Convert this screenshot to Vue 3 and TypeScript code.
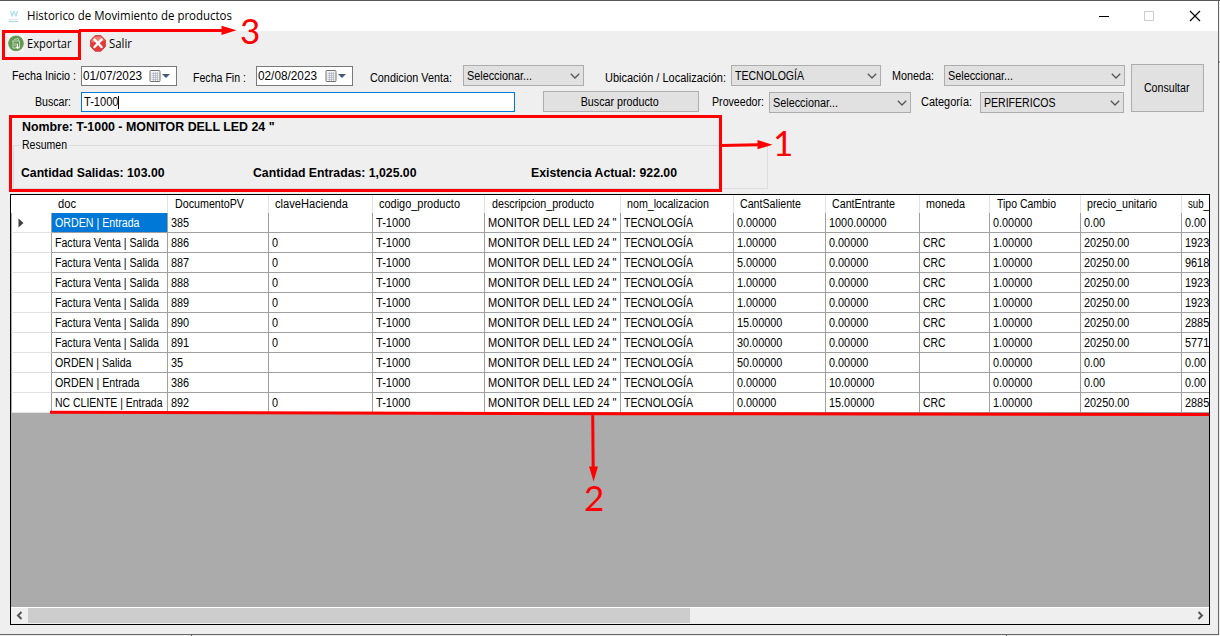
<script setup lang="ts">
import type { Directive } from 'vue'

// Condenses or widens a label horizontally so it occupies the given width in pixels.
const vFit: Directive<HTMLElement, number> = {
  mounted(el, { value }) {
    const natural = el.getBoundingClientRect().width
    if (natural > 0 && value > 0) el.style.transform = `scaleX(${value / natural})`
  },
}

interface Column {
  name: string
  width: number
  text: number
  pad: number
}

const columns: Column[] = [
  { name: 'doc', width: 116, text: 18, pad: 6 },
  { name: 'DocumentoPV', width: 101, text: 69, pad: 7 },
  { name: 'claveHacienda', width: 104, text: 73, pad: 6 },
  { name: 'codigo_producto', width: 112, text: 81, pad: 6 },
  { name: 'descripcion_producto', width: 136, text: 102, pad: 7 },
  { name: 'nom_localizacion', width: 113, text: 82, pad: 6 },
  { name: 'CantSaliente', width: 92, text: 61, pad: 6 },
  { name: 'CantEntrante', width: 94, text: 63, pad: 6 },
  { name: 'moneda', width: 70, text: 39, pad: 6 },
  { name: 'Tipo Cambio', width: 91, text: 59, pad: 7 },
  { name: 'precio_unitario', width: 101, text: 70, pad: 6 },
  { name: 'sub_', width: 28, text: 21, pad: 6 },
]

const item = ['T-1000', 'MONITOR DELL LED 24 "', 'TECNOLOGÍA']
const sale = (doc: string, qty: string, sub: string) =>
  ['Factura Venta | Salida', doc, '0', ...item, qty, '0.00000', 'CRC', '1.00000', '20250.00', sub]
const order = (kind: string, doc: string, out: string, into: string) =>
  [`ORDEN | ${kind}`, doc, '', ...item, out, into, '', '0.00000', '0.00', '0.00']

const rows: string[][] = [
  order('Entrada', '385', '0.00000', '1000.00000'),
  sale('886', '1.00000', '1923'),
  sale('887', '5.00000', '9618'),
  sale('888', '1.00000', '1923'),
  sale('889', '1.00000', '1923'),
  sale('890', '15.00000', '2885'),
  sale('891', '30.00000', '5771'),
  order('Salida', '35', '50.00000', '0.00000'),
  order('Entrada', '386', '0.00000', '10.00000'),
  ['NC CLIENTE | Entrada', '892', '0', ...item, '0.00000', '15.00000', 'CRC', '1.00000', '20250.00', '2885'],
]

const wordWidths: Record<string, number> = {
  'T-1000': 34.5,
  'MONITOR DELL LED 24 "': 128.5,
  'TECNOLOGÍA': 69,
  'Factura Venta | Salida': 104,
  'ORDEN | Entrada': 84.5,
  'ORDEN | Salida': 76.5,
  'NC CLIENTE | Entrada': 107.5,
  CRC: 22.5,
}
const cellWidth = (s: string) => {
  if (wordWidths[s]) return wordWidths[s]
  return [...s].reduce((w, c) => w + (c === '.' ? 3 : 6.05), 0)
}
</script>

<template>
  <div class="window">
    <header class="titlebar">
      <svg class="app-icon" width="12" height="14" viewBox="0 0 12 14">
        <path d="M2.5 2l1.5 5 2-4.500 2 4.500 1.500-5" fill="none" stroke="#a5dcea" stroke-width="1.1" />
        <path d="M1 10.500h9" stroke="#dfe7e9" stroke-width="1" />
        <path d="M1 12.500h9" stroke="#a9d8e0" stroke-width="1.2" />
      </svg>
      <span v-fit="205" class="title t">Historico de Movimiento de productos</span>
      <svg class="controls" width="104" height="14" viewBox="0 0 104 14" shape-rendering="crispEdges">
        <path d="M1 7.5h10" stroke="#000" />
        <rect x="46.5" y="2.5" width="9" height="9" fill="none" stroke="#ccc" />
        <path d="M92 2l10 10M102 2L92 12" stroke="#000" stroke-width="1.2" shape-rendering="auto" />
      </svg>
    </header>

    <nav class="toolbar">
      <svg width="16" height="17" viewBox="0 0 16 17">
        <rect width="16" height="17" fill="#f8f8f8" />
        <circle cx="8" cy="8.3" r="7.9" fill="#6da15c" />
        <circle cx="8" cy="8.3" r="6.7" fill="#609653" />
        <path d="M4 6h7M5 6v7h6.5V6M6 4.5l4-1 1.2 2.5M7 8v3M9 8v3" fill="none" stroke="#c4dab8" stroke-width="1" />
        <path d="M9.5 9v4M8 11.5l1.5 2 1.5-2" fill="none" stroke="#fff" />
      </svg>
      <span v-fit="44.5" class="t export">Exportar</span>
      <svg class="exit-icon" width="16" height="17" viewBox="0 0 16 17">
        <path d="M5 .6h6l4.400 4.600v6.300L11 16.200H5L.6 11.500V5.200z" fill="#e33a36" stroke="#cf4643" />
        <path d="M5 1.500h6l3.500 4-13 2V5.300z" fill="#f27b72" />
        <path d="M4.500 4.700l7 7.300M11.500 4.700l-7 7.300" stroke="#fff" stroke-width="2.500" stroke-linecap="round" />
      </svg>
      <span v-fit="23" class="t exit">Salir</span>
    </nav>

    <section class="filters">
      <div class="filter-rows">
        <div class="row first">
          <label class="l-from"><span v-fit="64" class="t">Fecha Inicio :</span></label>
          <div class="date">
            <span v-fit="59" class="t">01/07/2023</span>
            <svg width="22" height="14" viewBox="0 0 22 14">
              <rect x="1" y="1.5" width="10" height="11" rx="1" fill="#f4f4f2" stroke="#77706f" />
              <path d="M2.5 4.5h7M2.5 6.5h7M2.5 8.5h7M2.5 10.5h7M4.5 3v9M6.5 3v9M8.5 3v9" stroke="#a9b2bd" stroke-width=".7" />
              <path d="M13 5h8l-4 4z" fill="#44597d" />
            </svg>
          </div>
          <label class="l-to low"><span v-fit="53" class="t">Fecha Fin :</span></label>
          <div class="date second">
            <span v-fit="59" class="t">02/08/2023</span>
            <svg width="22" height="14" viewBox="0 0 22 14">
              <rect x="1" y="1.5" width="10" height="11" rx="1" fill="#f4f4f2" stroke="#77706f" />
              <path d="M2.5 4.5h7M2.5 6.5h7M2.5 8.5h7M2.5 10.5h7M4.5 3v9M6.5 3v9M8.5 3v9" stroke="#a9b2bd" stroke-width=".7" />
              <path d="M13 5h8l-4 4z" fill="#44597d" />
            </svg>
          </div>
          <label class="l-cond low"><span v-fit="82" class="t">Condicion Venta:</span></label>
          <div class="combo c-cond">
            <span v-fit="65" class="t">Seleccionar...</span>
            <svg width="10" height="6" viewBox="0 0 10 6"><path d="M.8.8L5 5 9.2.8" /></svg>
          </div>
          <label class="l-loc low"><span v-fit="121" class="t">Ubicación / Localización:</span></label>
          <div class="combo c-loc">
            <span v-fit="69" class="t">TECNOLOGÍA</span>
            <svg width="10" height="6" viewBox="0 0 10 6"><path d="M.8.8L5 5 9.2.8" /></svg>
          </div>
          <label class="l-cur"><span v-fit="42" class="t">Moneda:</span></label>
          <div class="combo c-cur">
            <span v-fit="65" class="t">Seleccionar...</span>
            <svg width="10" height="6" viewBox="0 0 10 6"><path d="M.8.8L5 5 9.2.8" /></svg>
          </div>
        </div>
        <div class="row last">
          <label class="l-find"><span v-fit="36" class="t">Buscar:</span></label>
          <div class="input"><span v-fit="34.5" class="t">T-1000</span><i class="caret"></i></div>
          <button class="find"><span v-fit="78" class="t centered">Buscar producto</span></button>
          <label class="l-prov"><span v-fit="52" class="t">Proveedor:</span></label>
          <div class="combo c-prov">
            <span v-fit="65" class="t">Seleccionar...</span>
            <svg width="10" height="6" viewBox="0 0 10 6"><path d="M.8.8L5 5 9.2.8" /></svg>
          </div>
          <label class="l-cat"><span v-fit="51" class="t">Categoría:</span></label>
          <div class="combo c-cat">
            <span v-fit="71.5" class="t">PERIFERICOS</span>
            <svg width="10" height="6" viewBox="0 0 10 6"><path d="M.8.8L5 5 9.2.8" /></svg>
          </div>
        </div>
      </div>
      <button class="consult"><span v-fit="45.5" class="t centered">Consultar</span></button>
    </section>

    <section class="summary">
      <div class="name"><span v-fit="252.5" class="t">Nombre: T-1000 - MONITOR DELL LED 24 "</span></div>
      <div class="group">
        <div class="legend"><i></i><span class="legend-box"><span v-fit="45" class="t">Resumen</span></span><i class="rest"></i></div>
        <div class="totals">
          <div class="total out"><span v-fit="143.5" class="t">Cantidad Salidas: 103.00</span></div>
          <div class="total in"><span v-fit="163.5" class="t">Cantidad Entradas: 1,025.00</span></div>
          <div class="total"><span v-fit="146" class="t">Existencia Actual: 922.00</span></div>
        </div>
      </div>
    </section>

    <main class="grid">
      <div class="head">
        <div class="stub"></div>
        <div v-for="c in columns" :key="c.name" class="th" :style="{ width: c.width + 'px', paddingLeft: c.pad + 'px' }">
          <span v-fit="c.text" class="t">{{ c.name }}</span>
        </div>
      </div>
      <div v-for="(r, i) in rows" :key="i" class="tr">
        <div class="stub">
          <svg v-if="i === 0" width="6" height="10" viewBox="0 0 6 10"><path d="M.5.5L5.5 5 .5 9.5z" fill="#404040" /></svg>
        </div>
        <div
          v-for="(v, j) in r"
          :key="j"
          class="td"
          :class="{ selected: i === 0 && j === 0 }"
          :style="{ width: columns[j].width + 'px' }"
        >
          <span v-if="v" v-fit="cellWidth(v)" class="t">{{ v }}</span>
        </div>
      </div>
      <div class="void"></div>
      <div class="scroll">
        <svg width="17" height="15" viewBox="0 0 17 15"><path d="M10.5 4L7 7.5l3.5 3.5" /></svg>
        <div class="thumb"></div>
        <svg class="right" width="17" height="15" viewBox="0 0 17 15"><path d="M6.5 4L10 7.5 6.5 11" /></svg>
      </div>
    </main>

    <svg class="marks" width="1220" height="636" viewBox="0 0 1220 636">
      <g fill="none" stroke="#f00" stroke-width="3">
        <path d="M3.5 31.5h76v27h-76zM79 30.5h144" />
        <path d="M10.5 116.5h710v74h-710zM721 145.5l38-.8" />
        <path d="M50 412.3L620 413.7 1209 414.4M592.7 415l.5 54" />
      </g>
      <g fill="#f00">
        <path d="M221.5 25.7l15 4.6-15 4.7zM757.5 140l15 4.7-15 4.6zM589 466.5h9l-4.4 15z" />
        <g class="digits">
          <text x="240" y="43.5">3</text>
          <text x="773" y="156">1</text>
          <text x="584" y="511">2</text>
        </g>
      </g>
      <path d="M191.500 635v1M1006.500 635v1M1218 62h2" stroke="#555" />
    </svg>
  </div>
</template>

<style>
body { margin: 0; background: #efefef; overflow: hidden; }
</style>

<style scoped>
.window {
  position: relative;
  box-sizing: border-box;
  width: 1220px;
  height: 636px;
  display: flex;
  flex-direction: column;
  background: linear-gradient(#666, #666) 0 633px / 1219px 1px no-repeat,
    linear-gradient(#666, #666) 1218px 0 / 1px 634px no-repeat, #efefef;
  border-top: 1px solid #5b585b;
  font: 12px/14px "Liberation Sans", Arial, sans-serif;
  color: #000;
  overflow: hidden;
}
.t { display: inline-block; flex: none; white-space: nowrap; transform-origin: left center; }
.t.centered { transform-origin: center; }
.titlebar {
  display: flex;
  align-items: center;
  flex: none;
  height: 30px;
  width: 1218px;
  background: #fff;
}
.app-icon { margin-left: 8px; }
.title { margin-left: 7px; font: 12px/16px "Open Sans", sans-serif; }
.controls { margin-left: auto; margin-right: 16px; }
.toolbar {
  display: flex;
  align-items: center;
  height: 25px;
  flex: none;
  padding-left: 8px;
  font: 12px/16px "Open Sans", sans-serif;
}
.export { margin-left: 3px; }
.exit-icon { flex: none; margin-left: 15px; }
.exit { margin-left: 3px; }
.filters { display: flex; flex: none; height: 59px; }
.filter-rows { width: 1131px; flex: none; }
.row { display: flex; align-items: flex-start; height: 27px; }
.first { padding: 9px 0 0 12px; height: 26px; }
.last { padding-left: 35px; }
label { display: block; flex: none; padding-top: 4px; height: 16px; }
label.low { padding-top: 6px; }
.last label { padding-top: 4px; }
.l-from { width: 69px; }
.l-to { width: 63px; margin-left: 16px; }
.l-cond { width: 93px; margin-left: 17px; }
.l-loc { width: 126px; margin-left: 21px; }
.l-cur { width: 52px; margin-left: 11px; }
.l-find { width: 46px; }
.l-prov { width: 57px; margin-left: 13px; }
.l-cat { width: 59px; margin-left: 10px; }
.date, .combo, .input, button {
  display: flex;
  align-items: center;
  box-sizing: border-box;
  flex: none;
  overflow: hidden;
}
.date {
  justify-content: space-between;
  width: 96px;
  height: 20px;
  margin-top: 1px;
  border: 1px solid #7a7a7a;
  background: #fff;
  padding: 0 5px 0 1px;
}
.date.second { width: 97px; }
.date svg { margin-left: -8px; flex: none; }
.combo {
  justify-content: space-between;
  height: 21px;
  padding: 0 3px;
  border: 1px solid #adadad;
  background: #e1e1e1;
}
.combo path { fill: none; stroke: #555; stroke-width: 1.3; }
.last .combo { margin-top: 1px; }
.c-cond { width: 121px; }
.c-loc { width: 150px; }
.c-cur { width: 181px; }
.c-prov { width: 142px; }
.c-cat { width: 144px; }
.input {
  position: relative;
  width: 434px;
  height: 20px;
  margin-top: 1px;
  padding-left: 2px;
  border: 1px solid #0078d7;
  background: #fff;
}
.caret { position: absolute; left: 36px; top: 3px; width: 1px; height: 13px; background: #000; }
button {
  justify-content: center;
  border: 1px solid #adadad;
  background: #e1e1e1;
  padding: 0;
  font: inherit;
  color: inherit;
}
.find { width: 156px; height: 21px; margin-left: 28px; padding-right: 3px; }
.consult { width: 73px; height: 48px; margin-top: 8px; padding-right: 2px; }
.summary { height: 79px; flex: none; padding-left: 13px; box-sizing: border-box; }
.name { padding: 5px 0 0 9px; height: 14px; font-weight: bold; }
.group {
  box-sizing: border-box;
  width: 755px;
  height: 44px;
  margin-top: 11px;
  border: 1px solid #dcdcdc;
  border-top: 0;
}
.legend { display: flex; height: 14px; }
.legend i { width: 6px; height: 1px; background: #dcdcdc; }
.legend .rest { flex: 1; }
.legend-box { width: 49px; height: 14px; margin-top: -7px; padding-left: 2px; box-sizing: border-box; }
.totals { display: flex; padding: 7px 0 0 7px; font-weight: bold; }
.total { flex: none; width: 146px; }
.out { width: 232px; }
.in { width: 278px; }
.grid {
  box-sizing: border-box;
  display: flex;
  flex-direction: column;
  flex: none;
  width: 1200px;
  height: 431px;
  margin-left: 10px;
  border: 1px solid #000;
  overflow: hidden;
  background: #fff;
}
.head, .tr { display: flex; flex: none; box-sizing: border-box; }
.head { height: 18px; }
.head .stub, .tr .stub { flex: none; box-sizing: border-box; width: 41px; }
.th { box-sizing: border-box; flex: none; padding-top: 2px; border-right: 1px solid #e2e2e2; }
.th:last-child, .td:last-child { border-right: 0; }
.tr { height: 20px; }
.tr .stub { border-left: 1px solid #ababab; border-right: 1px solid #a0a0a0; border-bottom: 1px solid #e2e2e2; padding: 5px 0 0 6px; }
.td { box-sizing: border-box; flex: none; padding: 3px 0 0 3px; border-right: 1px solid #a0a0a0; border-bottom: 1px solid #a0a0a0; }
.stub svg { display: block; }
.selected { background: #0078d7; color: #fff; }
.void { flex: 1; background: #ababab; border-bottom: 1px solid #fff; }
.scroll { display: flex; height: 16px; flex: none; background: #efefef; }
.scroll path { fill: none; stroke: #555; stroke-width: 2; }
.scroll .right { margin-left: auto; }
.thumb { width: 662px; height: 15px; background: #cdcdcd; }
.marks { position: absolute; left: 0; top: -1px; pointer-events: none; }
.digits { font: 35px Lato, "Open Sans", sans-serif; }
</style>
